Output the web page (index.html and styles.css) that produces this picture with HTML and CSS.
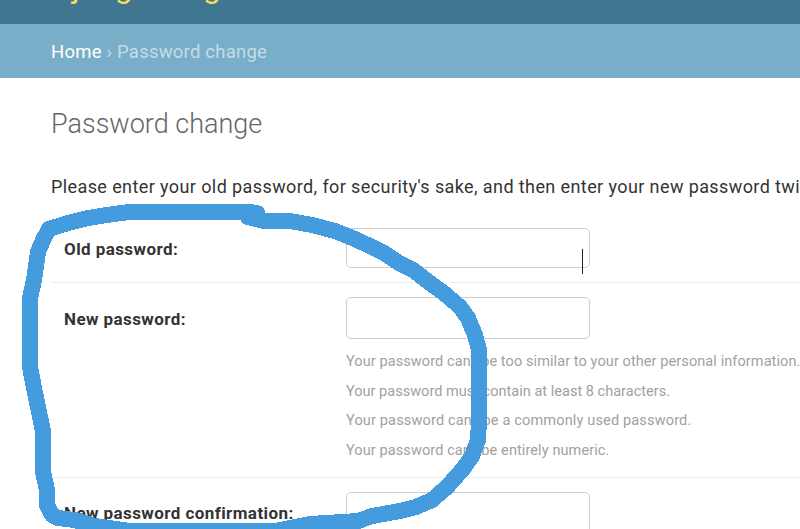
FILE: index.html
```html
<!DOCTYPE html>
<html lang="en">
<head>
<meta charset="utf-8">
<title>Password change</title>
<link rel="stylesheet" href="styles.css">
</head>
<body>
<header class="header"><span class="brand">Django blog</span></header>
<nav class="crumbs"><a>Home</a> › Password change</nav>
<main class="content">
  <h1>Password change</h1>
  <p class="intro">Please enter your old password, for security's sake, and then enter your new password twice</p>
  <form>
    <div class="row row-old"><label>Old password:</label><div class="field"><input type="password"><span class="caret"></span></div></div>
    <div class="row row-new"><label>New password:</label><div class="field"><input type="password">
      <ul class="help">
        <li class="similar">Your password can't be too similar to your other personal information.</li>
        <li class="length">Your password must contain at least 8 characters.</li>
        <li class="common">Your password can't be a commonly used password.</li>
        <li class="numeric">Your password can't be entirely numeric.</li>
      </ul></div></div>
    <div class="row row-confirm"><label>New password confirmation:</label><div class="field"><input type="password"></div></div>
  </form>
</main>
<svg class="marker" viewBox="0 0 800 529" shape-rendering="crispEdges"><path d="M257 213L249 212H129L107 215L88 218L68 223L49 229L43 240L38 252L36 266L34 280L30 298V367L34 388L39 412L43 431V472L47 490V505L52 515L58 518L74 520L95 526L130 531H275L310 524L358 521L372 516L400 511L416 507L432 500L447 487L463 469L472 456L478 440L479 420V350L475 335L468 318L460 307L445 294L430 283L413 270L399 263L384 253L374 248L355 239L335 231L312 225L290 221H264L248 217"/></svg>
</body>
</html>
```
FILE: styles.css
```css
* { box-sizing: border-box; }
html, body { margin: 0; height: 529px; overflow: hidden; }
body { position: relative; background: #fff; color: #333; font-family: Roboto, sans-serif; display: flex; flex-direction: column; }
.header { flex: none; height: 24px; background: #417690; color: #f5dd5d; display: flex; align-items: flex-end; padding: 0 0 18px 51px; font-size: 32px; font-weight: 400; line-height: 38px; overflow: hidden; }
.crumbs { flex: none; height: 54px; background: #79aec8; color: #c4dce8; padding-left: 51px; font-size: 18.5px; letter-spacing: .22px; line-height: 57px; white-space: nowrap; }
.crumbs a { color: #fff; }
.content { padding-left: 51px; white-space: nowrap; overflow: hidden; flex: 1; }
h1 { margin: 29px 0 0; font-size: 27px; line-height: 34px; font-weight: 300; color: #666; }
.intro { margin: 34px 0 0; font-size: 18px; letter-spacing: .4px; line-height: 24px; overflow: hidden; }
.row { display: flex; border-bottom: 1px solid #eee; padding-left: 13px; }
.row-old { height: 84px; padding-top: 29px; }
.row-new { height: 195px; padding-top: 14px; }
.row-confirm { padding-top: 14px; }
label { flex: none; width: 282px; font-size: 17px; letter-spacing: .42px; font-weight: 700; line-height: 44px; }
.row-old label, .row-confirm label { line-height: 42px; }
.field { position: relative; }
input { display: block; width: 244px; height: 42px; margin: 0; border: 1px solid #ccc; border-radius: 5px; background: #fff; }
.row-old input { height: 40px; }
.caret { position: absolute; left: 236px; top: 21px; width: 1px; height: 25px; background: #222; }
.help { list-style: none; margin: 8px 0 0; padding: 0; font-size: 14.5px; line-height: 29.5px; color: #a1a1a1; }
.similar { letter-spacing: .09px; }
.length { letter-spacing: .02px; }
.common { letter-spacing: .16px; }
.numeric { letter-spacing: .1px; }
.marker { position: absolute; left: 0; top: 0; width: 800px; height: 529px; fill: none; stroke: #449cdf; stroke-width: 16px; stroke-linejoin: round; stroke-linecap: round; }
```
